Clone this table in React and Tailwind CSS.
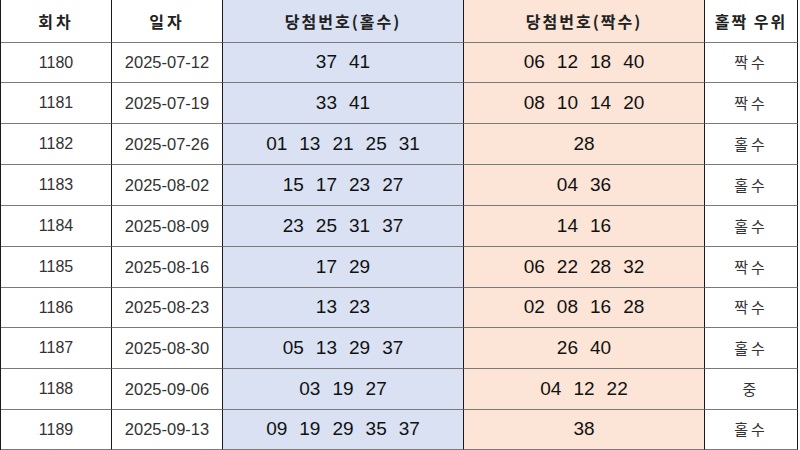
const ROWS = [
  { no: 1180, date: '2025-07-12', odd: ['37', '41'], even: ['06', '12', '18', '40'], win: '짝수' },
  { no: 1181, date: '2025-07-19', odd: ['33', '41'], even: ['08', '10', '14', '20'], win: '짝수' },
  { no: 1182, date: '2025-07-26', odd: ['01', '13', '21', '25', '31'], even: ['28'], win: '홀수' },
  { no: 1183, date: '2025-08-02', odd: ['15', '17', '23', '27'], even: ['04', '36'], win: '홀수' },
  { no: 1184, date: '2025-08-09', odd: ['23', '25', '31', '37'], even: ['14', '16'], win: '홀수' },
  { no: 1185, date: '2025-08-16', odd: ['17', '29'], even: ['06', '22', '28', '32'], win: '짝수' },
  { no: 1186, date: '2025-08-23', odd: ['13', '23'], even: ['02', '08', '16', '28'], win: '짝수' },
  { no: 1187, date: '2025-08-30', odd: ['05', '13', '29', '37'], even: ['26', '40'], win: '홀수' },
  { no: 1188, date: '2025-09-06', odd: ['03', '19', '27'], even: ['04', '12', '22'], win: '중' },
  { no: 1189, date: '2025-09-13', odd: ['09', '19', '29', '35', '37'], even: ['38'], win: '홀수' },
];

// row heights incl. bottom border, so the lines land on the same pixels
const HEIGHTS = ['h-[40px]', 'h-[41px]', 'h-[41px]', 'h-[41px]', 'h-[41px]', 'h-[41px]', 'h-[40px]', 'h-[41px]', 'h-[41px]', 'h-[40px]'];

const kr = "font-['Noto_Sans_CJK_KR','Noto_Sans',sans-serif]";
const num = "font-['Liberation_Sans',Arial,sans-serif]";

const cell = 'flex items-center justify-center border-r border-r-[#1a1a1a] border-b border-b-[#7a7a7a]';
const head = `${cell} h-[43px] text-[16px] font-bold text-[#222] ${kr}`;

function Balls({ list }) {
  return (
    <div className={`flex gap-[12px] text-[19px] text-[#111] ${num}`}>
      {list.map((n, i) => (
        <span key={i}>{n}</span>
      ))}
    </div>
  );
}

export default function App() {
  return (
    <div className="w-[800px] h-[450px] bg-white overflow-hidden">
      <div className="w-[798px] border-l border-l-[#1a1a1a] grid grid-cols-[111px_111px_241px_241px_93px]">
        <div className={`${head} tracking-[3px]`}>회차</div>
        <div className={`${head} tracking-[3px]`}>일자</div>
        <div className={`${head} bg-[#d9e1f2] tracking-[2px]`}>당첨번호(홀수)</div>
        <div className={`${head} bg-[#fce4d6] tracking-[2px]`}>당첨번호(짝수)</div>
        <div className={`${head} tracking-[2px]`}>홀짝 우위</div>

        {ROWS.map((r, i) => (
          <div key={r.no} className="contents">
            <div className={`${cell} ${HEIGHTS[i]} text-[16px] text-[#333] ${num}`}>{r.no}</div>
            <div className={`${cell} ${HEIGHTS[i]} text-[16.5px] text-[#333] ${num}`}>{r.date}</div>
            <div className={`${cell} ${HEIGHTS[i]} bg-[#d9e1f2]`}><Balls list={r.odd} /></div>
            <div className={`${cell} ${HEIGHTS[i]} bg-[#fce4d6]`}><Balls list={r.even} /></div>
            <div className={`${cell} ${HEIGHTS[i]} text-[15px] tracking-[3px] text-[#333] ${kr}`}>{r.win}</div>
          </div>
        ))}
      </div>
    </div>
  );
}
